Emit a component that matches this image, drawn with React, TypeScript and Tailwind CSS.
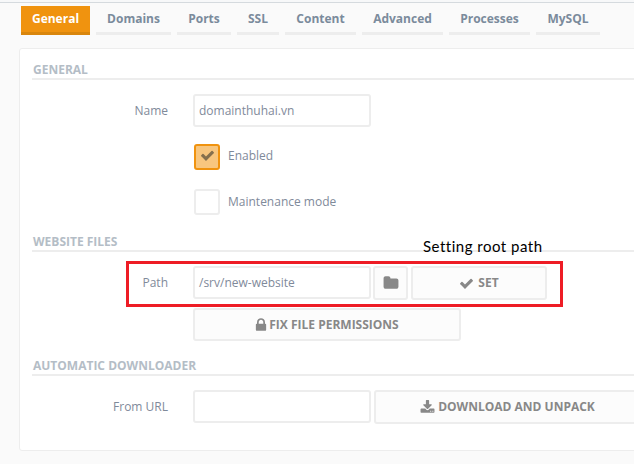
import type { ReactNode } from "react";

const ICONS = {
  check:
    "M1671 566q0 40-28 68l-724 724-136 136q-28 28-68 28t-68-28l-136-136-362-362q-28-28-28-68t28-68l136-136q28-28 68-28t68 28l294 295 656-657q28-28 68-28t68 28l136 136q28 28 28 68z",
  folder:
    "M1728 608v704q0 92-66 158t-158 66h-1216q-92 0-158-66t-66-158v-960q0-92 66-158t158-66h320q92 0 158 66t66 158v32h672q92 0 158 66t66 158z",
  lock: "M640 768h512v-192q0-106-75-181t-181-75-181 75-75 181v192zm832 96v576q0 40-28 68t-68 28h-960q-40 0-68-28t-28-68v-576q0-40 28-68t68-28h32v-192q0-184 132-316t316-132 316 132 132 316v192h32q40 0 68 28t28 68z",
  download:
    "M1344 1344q0-26-19-45t-45-19-45 19-19 45 19 45 45 19 45-19 19-45zm256 0q0-26-19-45t-45-19-45 19-19 45 19 45 45 19 45-19 19-45zm128-224v320q0 40-28 68t-68 28h-1472q-40 0-68-28t-28-68v-320q0-40 28-68t68-28h465l135 136q58 56 136 56t136-56l136-136h464q40 0 68 28t28 68zm-325-569q17 41-14 70l-448 448q-18 19-45 19t-45-19l-448-448q-31-29-14-70 17-39 59-39h256v-448q0-26 19-45t45-19h256q26 0 45 19t19 45v448h256q42 0 59 39z",
};

function Icon({ name, className = "size-[15px]" }: { name: keyof typeof ICONS; className?: string }) {
  return (
    <svg viewBox="0 0 1792 1792" className={`shrink-0 fill-current ${className}`}>
      <path d={ICONS[name]} />
    </svg>
  );
}

const TABS = [
  { label: "General", width: "w-[69px]" },
  { label: "Domains", width: "w-[75px]" },
  { label: "Ports", width: "w-[54px]" },
  { label: "SSL", width: "w-[42px]" },
  { label: "Content", width: "w-[71px]" },
  { label: "Advanced", width: "w-[81px]" },
  { label: "Processes", width: "w-[81px]" },
  { label: "MySQL", width: "w-[64px]" },
];

function Heading({ children, className }: { children: ReactNode; className: string }) {
  return (
    <h2 className={`h-5 shrink-0 border-b-2 border-[#ededed] pl-px text-xs leading-[19px] font-bold text-[#b4bdc6] ${className}`}>
      {children}
    </h2>
  );
}

function Row({ label, children, className }: { label?: string; children: ReactNode; className: string }) {
  return (
    <div className={`flex shrink-0 items-start ${className}`}>
      <div className="mr-[25px] w-[136px] shrink-0 text-right leading-[33px]">{label}</div>
      {children}
    </div>
  );
}

function Field({ value }: { value: string }) {
  return (
    <div className="h-[33px] w-[178px] shrink-0 rounded-[3px] border-2 border-[#ededed] bg-white px-1 leading-[29px]">
      {value}
    </div>
  );
}

function Button({ children, className }: { children: ReactNode; className: string }) {
  return (
    <button
      className={`flex shrink-0 items-center justify-center rounded-[3px] border-2 border-[#ededed] bg-[#fcfcfc] text-xs font-bold whitespace-nowrap text-[#888] ${className}`}
    >
      {children}
    </button>
  );
}

export default function App() {
  return (
    <div className="relative h-[464px] w-[634px] overflow-hidden bg-[#fafafa] font-['Open_Sans',sans-serif] text-xs text-[#7f8a9a]">
      <div className="h-[3px] border-b border-[#d5dade] bg-[#f7f8f9]" />
      <nav className="mt-[3px] ml-[21px] flex gap-1.5">
        {TABS.map((tab, i) => (
          <button
            key={tab.label}
            className={`h-[29px] shrink-0 border-b-[3px] pb-px text-xs leading-[25px] font-bold ${tab.width} ${
              i === 0 ? "border-[#d9860d] bg-[#f0930f] text-white" : "border-[#ededed] text-[#7b8b9c]"
            }`}
          >
            {tab.label}
          </button>
        ))}
      </nav>
      <main className="mt-[13px] ml-[19px] flex h-[403px] w-[640px] flex-col rounded-[3px] border border-[#ededed] bg-white pl-3">
        <Heading className="mt-[11px]">GENERAL</Heading>
        <Row label="Name" className="mt-[14px]">
          <Field value="domainthuhai.vn" />
        </Row>
        <Row className="mt-[17px] h-[26px]">
          <div className="ml-px flex size-[26px] items-start justify-center rounded-[3px] border-2 border-[#f0930f] bg-[#f8c67e] pt-[2px] text-[#86704d]">
            <Icon name="check" />
          </div>
          <span className="ml-2 leading-6">Enabled</span>
        </Row>
        <Row className="mt-[19px] h-[26px]">
          <div className="ml-px size-[26px] rounded-[3px] border-2 border-[#ededed] bg-white" />
          <span className="ml-2 leading-[26px]">Maintenance mode</span>
        </Row>
        <Heading className="mt-[17px]">WEBSITE FILES</Heading>
        <Row label="Path" className="mt-[14px] h-[34px]">
          <Field value="/srv/new-website" />
          <Button className="ml-0.5 h-[34px] w-[35px]">
            <Icon name="folder" className="size-4" />
          </Button>
          <Button className="ml-[3px] h-[34px] w-[136px] gap-1">
            <Icon name="check" />
            SET
          </Button>
        </Row>
        <Row className="mt-2 h-[33px]">
          <Button className="h-[33px] w-[268px] gap-0 pr-0.5">
            <Icon name="lock" className="size-4" />
            FIX FILE PERMISSIONS
          </Button>
        </Row>
        <Heading className="mt-[15px]">AUTOMATIC DOWNLOADER</Heading>
        <Row label="From URL" className="mt-[14px]">
          <Field value="" />
          <Button className="ml-[3px] h-[34px] w-[268px] gap-[3px] pr-px">
            <Icon name="download" />
            DOWNLOAD AND UNPACK
          </Button>
        </Row>
      </main>
      <div className="absolute top-[261px] left-[126px] h-[46px] w-[437px] border-[3px] border-[#ee1c25]" />
      <div className="absolute top-[236px] left-[423px] font-[Lato,sans-serif] text-[15px] leading-5 tracking-[0.5px] whitespace-nowrap text-black">
        Setting root path
      </div>
    </div>
  );
}
